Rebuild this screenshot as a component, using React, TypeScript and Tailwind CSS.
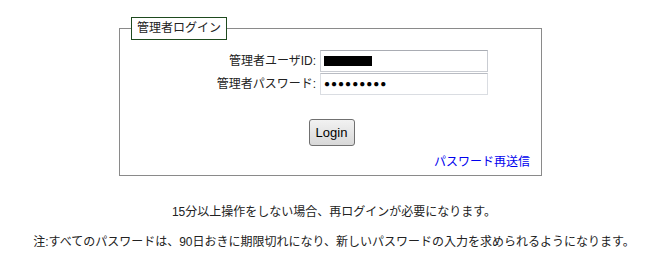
import React from "react";

function LoginBox() {
  return (
    <fieldset className="ml-[119px] w-[423px] border border-[#8a8a8a] px-[11px] pb-[2px] pt-0">
      <legend className="border border-[#1e4a1e] px-[5px] py-[1px] text-[12px] leading-[19px] text-[#222]">
        管理者ログイン
      </legend>

      <div className="mt-[10px] flex flex-col gap-[1px] pl-[70px]">
        {/* user id */}
        <div className="flex items-center">
          <label
            htmlFor="uid"
            className="w-[119px] pr-[4px] text-right text-[12px] text-[#222]"
          >
            管理者ユーザID:
          </label>
          <div
            id="uid"
            className="flex h-[22px] w-[168px] items-center border border-[#c9ccd2] border-t-[#a9acb3] bg-white pl-[3px]"
          >
            <span className="h-[10px] w-[48px] bg-black"></span>
          </div>
        </div>

        {/* password */}
        <div className="flex items-center">
          <label
            htmlFor="pwd"
            className="w-[119px] pr-[4px] text-right text-[12px] text-[#222]"
          >
            管理者パスワード:
          </label>
          <div
            id="pwd"
            className="flex h-[22px] w-[168px] items-center border border-[#dadde2] border-t-[#b9bcc3] bg-white pl-[3px] text-[10px] leading-none tracking-[1px] text-black"
          >
            ●●●●●●●●●
          </div>
        </div>
      </div>

      <div className="mt-[24px] flex justify-center pl-[2px]">
        <button
          type="button"
          className="h-[27px] w-[46px] rounded-[3px] border border-[#707070] bg-gradient-to-b from-[#f2f2f2] to-[#d8d8d8] font-['Liberation_Sans',sans-serif] text-[13px] text-black"
        >
          Login
        </button>
      </div>

      <div className="mt-[3px] text-right">
        <a href="#" className="text-[12px] text-[#0000ee]">
          パスワード再送信
        </a>
      </div>
    </fieldset>
  );
}

export default function App() {
  return (
    <div className="h-[271px] w-[668px] bg-white pt-[17px] font-['Liberation_Sans','Noto_Sans_CJK_JP',sans-serif] text-[#222]">
      <LoginBox />
      <p className="mt-[27px] text-center text-[12px]">
        15分以上操作をしない場合、再ログインが必要になります。
      </p>
      <p className="mt-[12px] text-center text-[12px]">
        注:すべてのパスワードは、90日おきに期限切れになり、新しいパスワードの入力を求められるようになります。
      </p>
    </div>
  );
}
